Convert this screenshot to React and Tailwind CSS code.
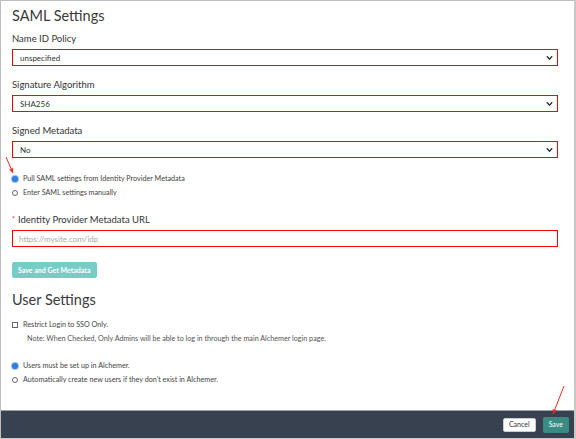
import React from 'react';

const font = { fontFamily: 'Lato, "Open Sans", sans-serif' };

const Chevron = () => (
  <svg width="7" height="5" viewBox="0 0 7 5" className="absolute right-[4px] top-1/2 -translate-y-1/2">
    <path d="M0.8 0.8 L3.5 3.8 L6.2 0.8" fill="none" stroke="#333" strokeWidth="1.4" />
  </svg>
);

const SelectBox = ({ value }) => (
  <div className="relative h-[17px] w-[546px] border-[1.5px] border-[#ff0000] bg-white flex items-center pl-[7px] text-[8px] text-[#333]">
    {value}
    <Chevron />
  </div>
);

const Field = ({ label, value, className }) => (
  <div className={className}>
    <div className="h-[14px] leading-[14px] text-[9.5px] text-[#333]">{label}</div>
    <div className="mt-[3px]">
      <SelectBox value={value} />
    </div>
  </div>
);

const Radio = ({ checked }) =>
  checked ? (
    <span className="w-[6px] h-[6px] rounded-full bg-[#2f7de1] ring-1 ring-[#9fc3f3] shrink-0" />
  ) : (
    <span className="w-[6px] h-[6px] rounded-full border border-[#666] bg-white shrink-0" />
  );

const OptionRow = ({ checked, children, box }) => (
  <div className="h-[14px] flex items-center gap-[5px] text-[7.2px] text-[#444]">
    {box ? <span className="w-[6px] h-[6px] border border-[#666] bg-white shrink-0" /> : <Radio checked={checked} />}
    <span>{children}</span>
  </div>
);

const Arrow = ({ x1, y1, x2, y2 }) => {
  const ang = Math.atan2(y2 - y1, x2 - x1);
  const s = 5;
  const p1 = [x2 - s * Math.cos(ang - 0.45), y2 - s * Math.sin(ang - 0.45)];
  const p2 = [x2 - s * Math.cos(ang + 0.45), y2 - s * Math.sin(ang + 0.45)];
  return (
    <svg className="absolute inset-0 pointer-events-none" width="576" height="439">
      <line x1={x1} y1={y1} x2={x2} y2={y2} stroke="#ee2a1f" strokeWidth="1" />
      <polygon points={`${x2},${y2} ${p1[0]},${p1[1]} ${p2[0]},${p2[1]}`} fill="#ee2a1f" />
    </svg>
  );
};

export default function App() {
  return (
    <div className="relative w-[576px] h-[439px] bg-[#c8c8c8] overflow-hidden" style={font}>
      <div className="absolute left-0 top-0 w-[574px] h-[438px] border-l border-t border-[#bdbdbd] bg-white flex flex-col">
        <div className="flex-1 pl-[11px]">
          <div className="mt-[5px] h-[20px] leading-[20px] text-[14.5px] text-[#3a3a3a]">SAML Settings</div>

          <Field className="mt-[6px]" label="Name ID Policy" value="unspecified" />
          <Field className="mt-[12px]" label="Signature Algorithm" value="SHA256" />
          <Field className="mt-[12px]" label="Signed Metadata" value="No" />

          <div className="mt-[14px]">
            <OptionRow checked>Pull SAML settings from Identity Provider Metadata</OptionRow>
            <OptionRow>Enter SAML settings manually</OptionRow>
          </div>

          <div className="mt-[13px] h-[14px] leading-[14px] text-[9.5px] text-[#333] flex items-center">
            <span className="text-[#e33] text-[7px] mr-[3px] -mt-[3px]">*</span>
            Identity Provider Metadata URL
          </div>
          <div className="mt-[3px] h-[17px] w-[546px] border-[1.5px] border-[#ff0000] flex items-center pl-[6px] text-[8px] text-[#aaa]">
            https://mysite.com/idp
          </div>

          <button className="mt-[15px] h-[16px] px-[6px] rounded-[2px] bg-[#76cdc6] text-white text-[7px] font-bold flex items-center">
            Save and Get Metadata
          </button>

          <div className="mt-[12px] h-[20px] leading-[20px] text-[14.5px] text-[#3a3a3a]">User Settings</div>

          <div className="mt-[8px]">
            <OptionRow box>Restrict Login to SSO Only.</OptionRow>
            <div className="h-[14px] leading-[14px] pl-[15px] text-[7.2px] text-[#555]">
              Note: When Checked, Only Admins will be able to log in through the main Alchemer login page.
            </div>
          </div>

          <div className="mt-[13px]">
            <OptionRow checked>Users must be set up in Alchemer.</OptionRow>
            <OptionRow>Automatically create new users if they don't exist in Alchemer.</OptionRow>
          </div>
        </div>

        <div className="h-[28px] border-t border-[#9aa0a8] bg-[#37414f] flex items-center justify-end gap-[7px] pr-[5px]">
          <button className="h-[14px] px-[5px] bg-white rounded-[2px] border border-[#ccc] text-[7px] text-[#333]">Cancel</button>
          <button className="h-[16px] px-[6px] bg-[#3b8b84] rounded-[2px] text-[7px] text-white">Save</button>
        </div>
      </div>
      <Arrow x1={6} y1={157} x2={13} y2={173} />
      <Arrow x1={564} y1={386} x2={553} y2={414} />
    </div>
  );
}
